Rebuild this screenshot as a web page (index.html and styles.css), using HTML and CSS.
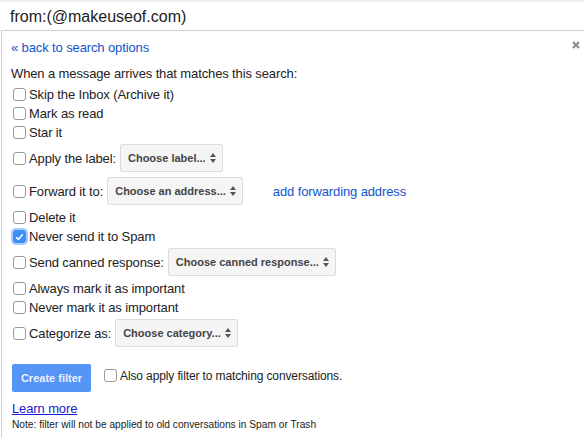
FILE: index.html
```html
<!DOCTYPE html>
<html>
<head>
<meta charset="utf-8">
<link rel="stylesheet" href="styles.css">
</head>
<body>
<div class="strip"></div>
<div class="search">from:(@makeuseof.com)</div>
<div class="panel">
  <span class="close"><svg width="8" height="8" viewBox="0 0 8 8"><path d="M1 1L7 7M7 1L1 7" stroke="#8a8a8a" stroke-width="2"/></svg></span>
  <div class="back"><a class="link">« back to search options</a></div>
  <div class="intro">When a message arrives that matches this search:</div>

  <div class="row"><span class="cb"></span>Skip the Inbox (Archive it)</div>
  <div class="row"><span class="cb"></span>Mark as read</div>
  <div class="row"><span class="cb"></span>Star it</div>
  <div class="row sel-row"><span class="cb"></span>Apply the label:<span class="select">Choose label...<svg class="arr" width="6" height="10" viewBox="0 0 6 10"><path d="M3 0L6 4H0Z M3 10L6 6H0Z" fill="#555"/></svg></span></div>
  <div class="row sel-row"><span class="cb"></span>Forward it to:<span class="select">Choose an address...<svg class="arr" width="6" height="10" viewBox="0 0 6 10"><path d="M3 0L6 4H0Z M3 10L6 6H0Z" fill="#555"/></svg></span><a class="link fwd">add forwarding address</a></div>
  <div class="row"><span class="cb"></span>Delete it</div>
  <div class="row"><span class="cb checked"><svg width="9" height="8" viewBox="0 0 9 8"><path d="M1.2 4.2L3.4 6.4L7.8 1.2" fill="none" stroke="#fff" stroke-width="1.6"/></svg></span>Never send it to Spam</div>
  <div class="row sel-row"><span class="cb"></span>Send canned response:<span class="select">Choose canned response...<svg class="arr" width="6" height="10" viewBox="0 0 6 10"><path d="M3 0L6 4H0Z M3 10L6 6H0Z" fill="#555"/></svg></span></div>
  <div class="row"><span class="cb"></span>Always mark it as important</div>
  <div class="row"><span class="cb"></span>Never mark it as important</div>
  <div class="row sel-row"><span class="cb"></span>Categorize as:<span class="select">Choose category...<svg class="arr" width="6" height="10" viewBox="0 0 6 10"><path d="M3 0L6 4H0Z M3 10L6 6H0Z" fill="#555"/></svg></span></div>

  <div class="actions">
    <span class="btn">Create filter</span>
    <div class="row also"><span class="cb"></span>Also apply filter to matching conversations.</div>
  </div>
  <div class="learn"><a class="learn-link">Learn more</a></div>
  <div class="note">Note: filter will not be applied to old conversations in Spam or Trash</div>
</div>
</body>
</html>
```

FILE: styles.css
```css
html, body {
  margin: 0;
  padding: 0;
  background: #fff;
}
body {
  font-family: "Liberation Sans", Arial, sans-serif;
  color: #222;
  font-size: 13px;
  width: 584px;
  height: 438px;
  overflow: hidden;
}
.strip {
  height: 2px;
  background: #f1f1f1;
}
.search {
  height: 28px;
  line-height: 30px;
  font-size: 16px;
  padding-left: 10px;
  color: #222;
}
.panel {
  position: relative;
  margin-left: 1px;
  border-left: 1px solid #d0d0d0;
  border-top: 1px solid #cfcfcf;
  padding: 7px 0 0 9px;
  height: 420px;
  letter-spacing: -0.12px;
}
.close {
  position: absolute;
  top: 10px;
  right: 4px;
  display: block;
  width: 8px;
  height: 8px;
}
.close svg { display: block; }
.link {
  color: #15c;
  text-decoration: none;
}
.back {
  line-height: 19px;
}
.intro {
  line-height: 19px;
  margin-top: 7px;
  margin-bottom: 2px;
}
.row {
  display: flex;
  align-items: center;
  height: 19px;
  white-space: nowrap;
}
.sel-row {
  height: 28px;
  padding: 2px 0 3px;
}
.cb {
  display: inline-flex;
  align-items: center;
  justify-content: center;
  box-sizing: border-box;
  width: 13px;
  height: 13px;
  margin: 0 3px 0 2px;
  border: 1px solid #9a9a9a;
  border-radius: 3px;
  background: #fff;
  flex: none;
}
.cb.checked {
  background: #3b8ff6;
  border-color: #3b8ff6;
  box-shadow: 0 0 0 2px rgba(100, 160, 250, 0.55);
}
.cb svg { display: block; }
.select {
  display: inline-flex;
  align-items: center;
  box-sizing: border-box;
  height: 28px;
  margin-left: 4px;
  padding: 0 6px 0 7px;
  background: #f5f5f5;
  border: 1px solid #dcdcdc;
  border-radius: 2px;
  font-size: 11px;
  font-weight: bold;
  color: #444;
  letter-spacing: 0;
}
.arr {
  display: block;
  margin-left: 4px;
}
.fwd {
  margin-left: 30px;
}
.actions {
  display: flex;
  align-items: flex-start;
  margin-top: 14px;
}
.btn {
  display: inline-flex;
  align-items: center;
  justify-content: center;
  width: 79px;
  height: 28px;
  margin-left: 1px;
  background: #5595f6;
  border-radius: 2px;
  color: #e9f0fd;
  font-size: 11px;
  font-weight: bold;
  letter-spacing: 0;
}
.also {
  margin-top: 2px;
  margin-left: 11px;
  font-size: 12px;
}
.learn {
  margin-top: 7px;
  line-height: 19px;
  margin-left: 1px;
}
.learn-link {
  color: #1a1ad0;
  text-decoration: underline;
}
.note {
  font-size: 10.2px;
  line-height: 13px;
  margin-left: 1px;
  color: #222;
  letter-spacing: 0;
}
```
